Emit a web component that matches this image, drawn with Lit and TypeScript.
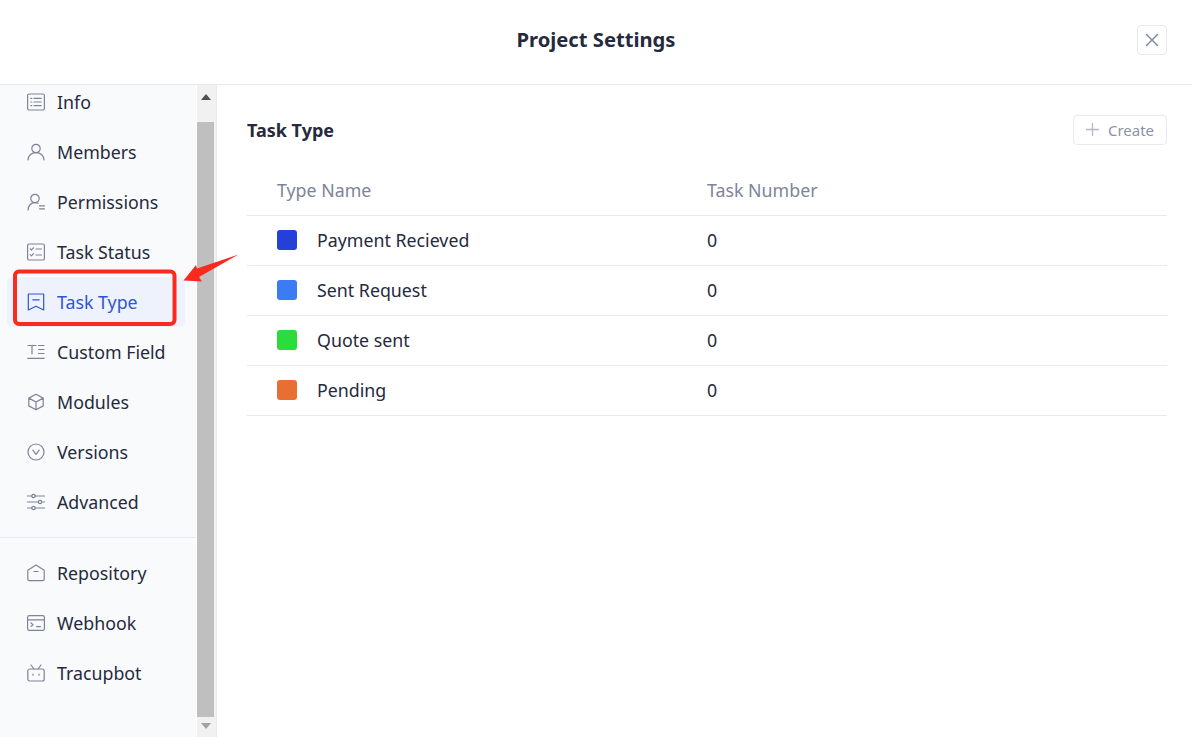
import { LitElement, html, css, svg } from "lit";
import { customElement } from "lit/decorators.js";

const g = (c: unknown) => html`<svg class="ic" viewBox="0 0 18 18" fill="none" stroke="currentColor" stroke-width="1.2" stroke-linecap="round" stroke-linejoin="round">${c}</svg>`;
const icons: Record<string, unknown> = {
  info: g(svg`<rect x="0.6" y="1" width="16.8" height="16" rx="1.6"/><path d="M3.8 5.400h1M3.800 9h1M3.800 12.600h1M7 5.400h7.200M7 9h7.200M7 12.600h7.200"/>`),
  members: g(svg`<circle cx="9" cy="5.500" r="4.200"/><path d="M1 17c0-4.300 3.400-7.300 8-7.300s8 3 8 7.300"/>`),
  perm: g(svg`<circle cx="8" cy="5.500" r="4.200"/><path d="M1 17c0-4.300 3-7.300 7-7.300 1.200 0 2.200.2 3 .6M12.500 12.800h5M12.500 15.800h5"/>`),
  status: g(svg`<rect x="0.600" y="1" width="16.800" height="16" rx="1.600"/><path d="M3.300 5.800l1.200 1.200 2-2.200M3.300 11.600l1.200 1.200 2-2.200M9 6h5.500M9 12h5.500"/>`),
  type: g(svg`<path d="M1.300 1h15.400v16l-7.700-3.800-7.700 3.800zM5.800 6.800h6.400"/>`),
  field: g(svg`<path d="M1 2.500h8M5 2.500v8.500M11.500 2.500h5.500M11.500 6.500h5.500M11.500 10.500h5.500M.8 15.300h16.400"/>`),
  modules: g(svg`<path d="M9 1.200l7.200 3.900v7.800L9 16.800l-7.200-3.900V5.100zM1.800 5.100L9 9l7.200-3.900M9 9v7.800"/>`),
  versions: g(svg`<circle cx="9" cy="9" r="8"/><path d="M5.800 7.200L9 11.400l3.200-4.200"/>`),
  advanced: g(svg`<path d="M.4 3h4.400M8.200 3h9.400M.4 9h10.900M14.700 9h2.900M.4 15h4.400M8.200 15h9.400"/><circle cx="6.500" cy="3" r="1.700"/><circle cx="13" cy="9" r="1.700"/><circle cx="6.500" cy="15" r="1.700"/>`),
  repo: g(svg`<path d="M.8 6.200L9 1l8.200 5.200v9.100a1.300 1.300 0 0 1-1.300 1.300H2.100a1.300 1.300 0 0 1-1.300-1.300zM7 7.500h4"/>`),
  webhook: g(svg`<rect x="0.600" y="1.600" width="16.800" height="14.800" rx="1.600"/><path d="M.6 5.800h16.800M4 9l2 1.700L4 12.400M9.500 12.600h4"/>`),
  bot: g(svg`<rect x="0.800" y="5" width="16.400" height="12" rx="2"/><path d="M4 1l3 4M14 1l-3 4M6 10v1.200M12 10v1.200"/>`),
};

const top = [["info","Info"],["members","Members"],["perm","Permissions"],["status","Task Status"],["type","Task Type"],["field","Custom Field"],["modules","Modules"],["versions","Versions"],["advanced","Advanced"]];
const bottom = [["repo","Repository"],["webhook","Webhook"],["bot","Tracupbot"]];
const rows = [["#2540d9","Payment Recieved"],["#3b7cf5","Sent Request"],["#2bdc3d","Quote sent"],["#e86f33","Pending"]];

@customElement("app-root")
export class AppRoot extends LitElement {
  static styles = css`
    :host { display: block; width: 1192px; height: 737px; position: relative; overflow: hidden; background: #fff;
      font-family: "Noto Sans", sans-serif; font-size: 17.8px; color: #252a3d; }
    * { box-sizing: border-box; }
    header { height: 85px; border-bottom: 1px solid #e8e9ee; display: flex; align-items: center; justify-content: center; position: relative; }
    h1 { margin: 0; font-size: 20.2px; font-weight: 700; line-height: 24px; margin-top: -6px; }
    .close { position: absolute; right: 25px; top: 25px; width: 30px; height: 30px; border: 1px solid #e8e9ee; border-radius: 4px; display: flex; align-items: center; justify-content: center; color: #7d8499; }
    .body { display: flex; height: 652px; }
    aside { width: 196px; background: #f9fafc; overflow: hidden; flex: none; }
    .list { margin-top: -8px; }
    .item { height: 50px; margin: 0 11px 0 7px; padding-left: 20px; display: flex; align-items: center; gap: 12px; border-radius: 6px; white-space: nowrap; }
    .item.on { background: #eef2fd; color: #2f55d4; }
    .ic { width: 18px; height: 18px; color: #7d8499; flex: none; }
    .on .ic { color: #2f55d4; }
    hr { margin: 10px 0 10px; border: 0; border-top: 1px solid #e8e9ee; }
    .bar { width: 21px; flex: none; background: #f1f1f1; border-right: 1px solid #e8e9ee; border-left: 1px solid #fff; display: flex; flex-direction: column; align-items: center; padding-right: 2px; }
    .tri { height: 37px; flex: none; display: flex; align-items: flex-start; justify-content: center; padding-top: 9px; }
    .tri.dn { height: 20px; padding-top: 6px; }
    .thumb { flex: 1; width: 17px; background: #bfbfbf; }
    main { flex: 1; padding: 30px 25px 0 30px; }
    .head { display: flex; justify-content: space-between; align-items: center; height: 30px; margin-bottom: 21px; }
    h2 { margin: 0; font-size: 18px; font-weight: 700; }
    .create { width: 94px; height: 30px; border: 1px solid #e8e9ee; border-radius: 4px; display: flex; align-items: center; justify-content: center; gap: 9px; font-size: 15px; color: #8c92a4; padding-bottom: 1px; }
    .row { display: grid; grid-template-columns: 430px 1fr; height: 50px; align-items: center; padding: 0 0 2px 30px; border-bottom: 1px solid #e8e9ee; }
    .row.th { color: #7d8499; }
    .name { display: flex; align-items: center; gap: 20px; }
    .sw { width: 20px; height: 20px; border-radius: 3px; }
    .anno { position: absolute; left: 0; top: 0; width: 260px; height: 340px; pointer-events: none; }
  `;

  private item(i: string[]) {
    return html`<div class="item ${i[1] === "Task Type" ? "on" : ""}">${icons[i[0]]}<span>${i[1]}</span></div>`;
  }

  render() {
    return html`
      <header>
        <h1>Project Settings</h1>
        <div class="close"><svg width="14" height="14" viewBox="0 0 14 14" fill="none" stroke="currentColor" stroke-width="1.4"><path d="M1 1l12 12M13 1L1 13"/></svg></div>
      </header>
      <div class="body">
        <aside>
          <div class="list">
            ${top.map((i) => this.item(i))}
            <hr />
            ${bottom.map((i) => this.item(i))}
          </div>
        </aside>
        <div class="bar">
          <div class="tri"><svg width="10" height="6" viewBox="0 0 10 6"><path d="M5 0l5 6H0z" fill="#505050"/></svg></div>
          <div class="thumb"></div>
          <div class="tri dn"><svg width="10" height="6" viewBox="0 0 10 6"><path d="M0 0h10L5 6z" fill="#a3a3a3"/></svg></div>
        </div>
        <main>
          <div class="head">
            <h2>Task Type</h2>
            <div class="create"><svg width="13" height="13" viewBox="0 0 13 13" stroke="#b4b8c5" stroke-width="1.3"><path d="M6.500 0v13M0 6.500h13"/></svg><span>Create</span></div>
          </div>
          <div class="row th"><span>Type Name</span><span>Task Number</span></div>
          ${rows.map((r) => html`<div class="row"><div class="name"><span class="sw" style="background:${r[0]}"></span><span>${r[1]}</span></div><span>0</span></div>`)}
        </main>
      </div>
      <svg class="anno" viewBox="0 0 260 340" fill="none">
        <rect x="15" y="271.500" width="159.500" height="52.500" rx="4" stroke="#fa2a20" stroke-width="4"/>
        <path d="M238.500 254.500L197 268.500 196 265 183.500 280.500 202 281.500 199 277z" fill="#fa2a20"/>
      </svg>
    `;
  }
}
